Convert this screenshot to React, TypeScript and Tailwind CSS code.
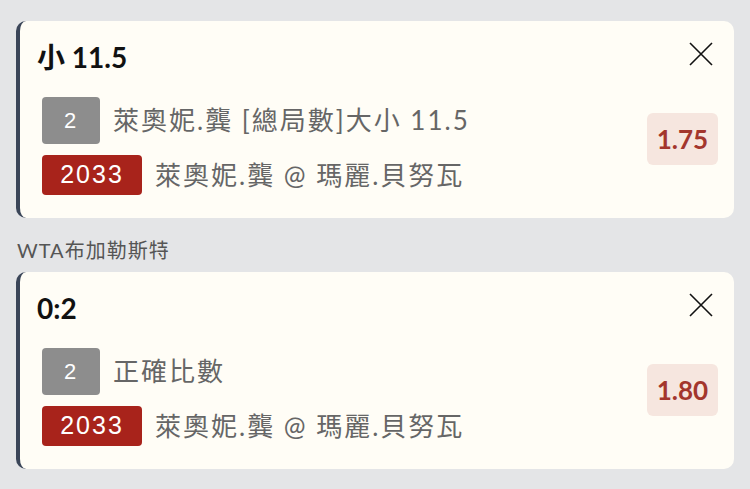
import React from 'react';

type Bet = {
  title: string;
  seq: string;
  desc: string;
  code: string;
  match: string;
  odds: string;
};

const bets: { league?: string; bet: Bet }[] = [
  {
    bet: {
      title: '小 11.5',
      seq: '2',
      desc: '萊奧妮.龔 [總局數]大小 11.5',
      code: '2033',
      match: '萊奧妮.龔 @ 瑪麗.貝努瓦',
      odds: '1.75',
    },
  },
  {
    league: 'WTA布加勒斯特',
    bet: {
      title: '0:2',
      seq: '2',
      desc: '正確比數',
      code: '2033',
      match: '萊奧妮.龔 @ 瑪麗.貝努瓦',
      odds: '1.80',
    },
  },
];

const font = { fontFamily: 'Lato, "Noto Sans CJK TC", sans-serif' };
const badgeFont = { fontFamily: '"Liberation Sans", Arial, sans-serif' };

const CloseIcon = () => (
  <svg width="24" height="24" viewBox="0 0 24 24" className="mt-[1px] mr-[5px] shrink-0">
    <path d="M1 1 L23 23 M23 1 L1 23" stroke="#111" strokeWidth="1.6" fill="none" />
  </svg>
);

const BetCard: React.FC<{ bet: Bet }> = ({ bet }) => (
  <div className="rounded-[10px] border-l-4 border-[#3a4558] bg-[#fffdf6] pt-[20px] pr-[16px] pb-[23px] pl-[22px]">
    <div className="flex items-start justify-between">
      <h3 className="-ml-[5px] text-[28px] leading-[32px] font-bold text-[#111]">{bet.title}</h3>
      <CloseIcon />
    </div>
    <div className="mt-[24px] flex items-center justify-between">
      <div className="flex flex-col gap-[11px]">
        <div className="flex h-[47px] items-center gap-[13px]">
          <span
            className="flex h-[47px] w-[58px] items-center justify-center rounded-[4px] bg-[#8d8d8d] pr-[2px] text-[22px] text-white"
            style={badgeFont}
          >
            {bet.seq}
          </span>
          <span className="text-[26px] tracking-[2px] whitespace-nowrap text-[#666]">{bet.desc}</span>
        </div>
        <div className="flex h-[40px] items-center gap-[13px]">
          <span
            className="flex h-[40px] w-[100px] items-center justify-center rounded-[4px] bg-[#a8231b] text-[25px] tracking-[2px] text-white"
            style={badgeFont}
          >
            {bet.code}
          </span>
          <span className="text-[26px] tracking-[2px] whitespace-nowrap text-[#666]">{bet.match}</span>
        </div>
      </div>
      <div className="mb-[14px] flex h-[52px] w-[71px] items-center justify-center rounded-[6px] bg-[#f6e6df] text-[26px] font-bold text-[#a3362d]">
        {bet.odds}
      </div>
    </div>
  </div>
);

export default function App() {
  return (
    <div className="min-h-[489px] bg-[#e4e5e7] px-[16px] pt-[21px] pb-[18px]" style={font}>
      {bets.map((b, i) => (
        <div key={i}>
          {b.league && (
            <div className="mt-[20px] mb-[10px] pl-[1px] text-[20px] leading-[24px] tracking-[1px] text-[#555]">
              {b.league}
            </div>
          )}
          <BetCard bet={b.bet} />
        </div>
      ))}
    </div>
  );
}
